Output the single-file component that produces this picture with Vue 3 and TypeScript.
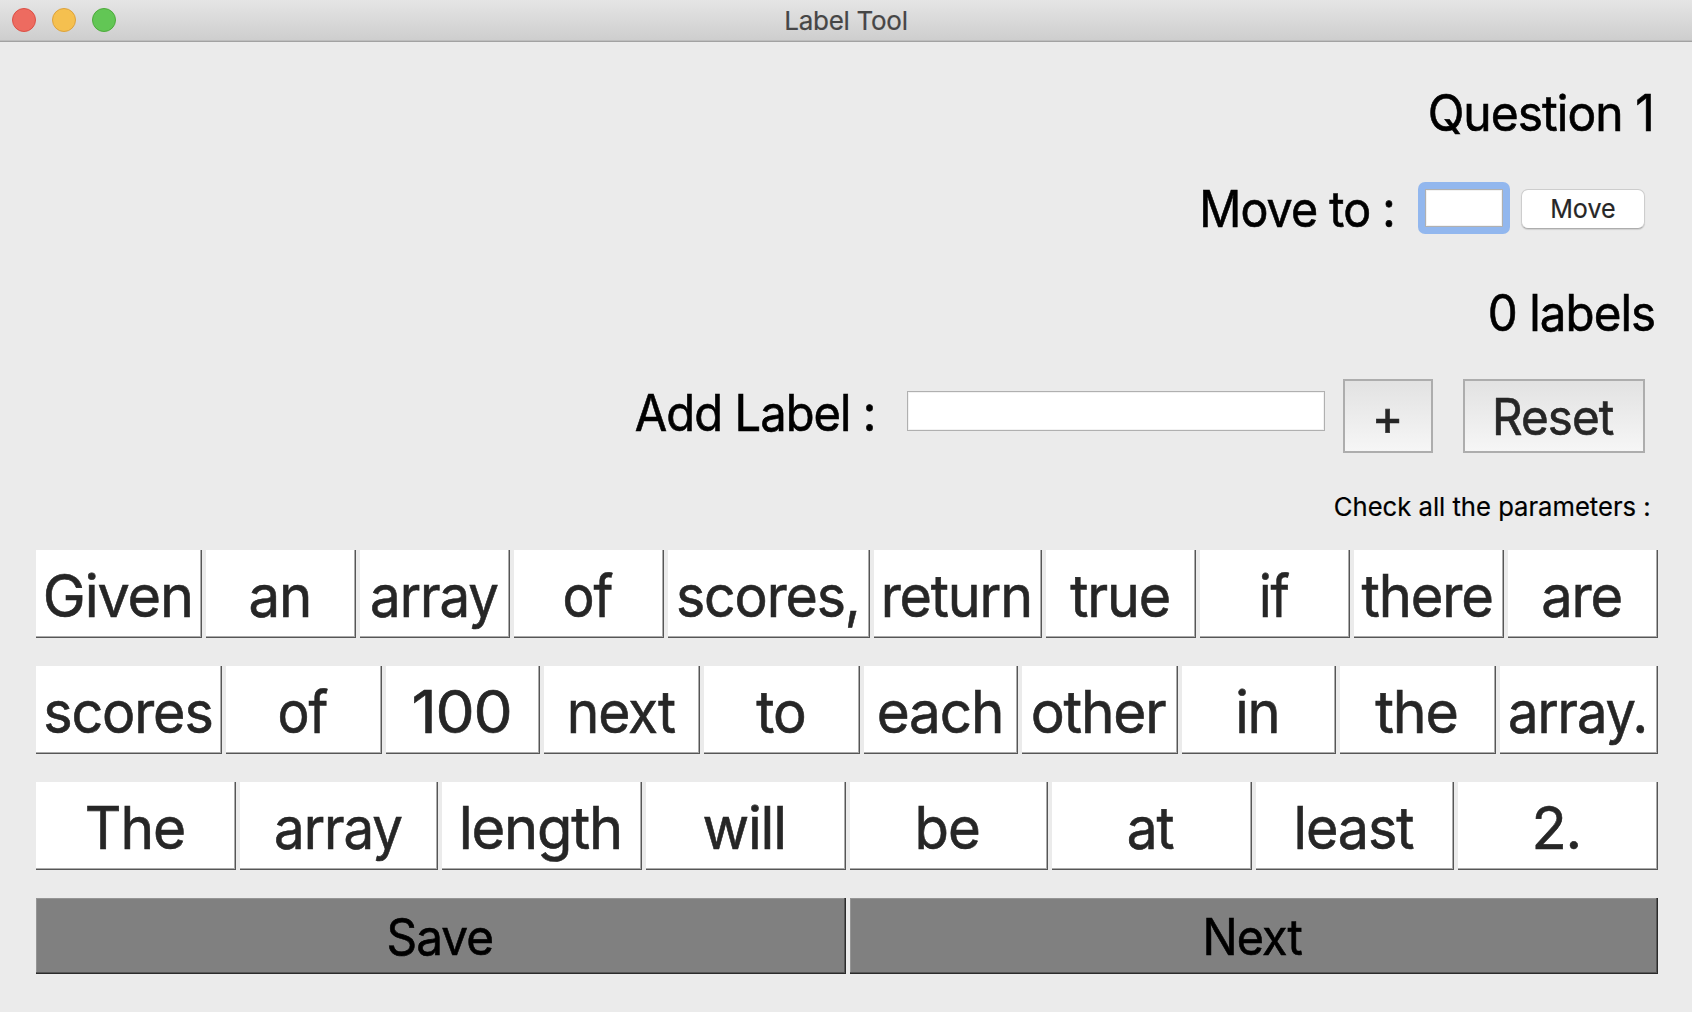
<script setup lang="ts">
interface Word {
  text: string
  width: number
  stretch: number
}

const w = (text: string, width: number, stretch: number): Word => ({ text, width, stretch })

const rows: Word[][] = [
  [
    w('Given', 166, 0.976), w('an', 150, 0.956), w('array', 150, 0.926), w('of', 150, 0.906),
    w('scores,', 202, 0.939), w('return', 168, 0.942), w('true', 150, 0.941), w('if', 150, 0.881),
    w('there', 150, 0.95), w('are', 150, 0.948),
  ],
  [
    w('scores', 186, 0.942), w('of', 156, 0.906), w('100', 154, 1.054), w('next', 156, 0.935),
    w('to', 156, 0.954), w('each', 154, 0.959), w('other', 156, 0.962), w('in', 154, 0.949),
    w('the', 156, 0.971), w('array.', 158, 0.92),
  ],
  [
    w('The', 200, 0.964), w('array', 198, 0.926), w('length', 200, 0.98), w('will', 200, 0.967),
    w('be', 198, 0.954), w('at', 200, 0.933), w('least', 198, 0.943), w('2.', 200, 0.982),
  ],
]

const stretch = (value: number) => ({ transform: `scaleX(${value})` })
</script>

<template>
  <div class="window">
    <header class="titlebar">
      <div class="lights">
        <span class="light close"></span>
        <span class="light minimize"></span>
        <span class="light zoom"></span>
      </div>
      <div class="title">Label Tool</div>
    </header>

    <main class="content">
      <div class="heading question"><span class="end" :style="stretch(0.959)">Question 1</span></div>

      <div class="move-row">
        <span class="caption end" :style="stretch(0.932)">Move to :</span>
        <div class="focus-ring"><input class="field small" type="text" /></div>
        <button class="mac-button"><span :style="stretch(0.966)">Move</span></button>
      </div>

      <div class="heading count"><span class="end" :style="stretch(0.95)">0 labels</span></div>

      <div class="add-row">
        <span class="caption end" :style="stretch(0.942)">Add Label :</span>
        <input class="field wide" type="text" />
        <button class="square-button plus"><span :style="stretch(0.96)">+</span></button>
        <button class="square-button reset"><span :style="stretch(0.951)">Reset</span></button>
      </div>

      <div class="hint"><span class="end" :style="stretch(0.985)">Check all the parameters :</span></div>

      <div class="words">
        <div v-for="(row, r) in rows" :key="r" class="word-row">
          <button v-for="(word, i) in row" :key="i" class="word" :style="{ width: word.width + 'px' }">
            <span :style="stretch(word.stretch)">{{ word.text }}</span>
          </button>
        </div>
      </div>

      <div class="actions">
        <button class="action save"><span :style="stretch(0.954)">Save</span></button>
        <button class="action next"><span :style="stretch(0.934)">Next</span></button>
      </div>
    </main>
  </div>
</template>

<style>
body {
  background: #ebebeb;
}
</style>

<style scoped>
.window {
  width: 1692px;
  height: 1012px;
  overflow: hidden;
  background: #ebebeb;
  color: #000;
  font-family: Inter, "Liberation Sans", sans-serif;
}

.window * {
  box-sizing: border-box;
}

span {
  display: inline-block;
  white-space: nowrap;
}

.end {
  transform-origin: right center;
}

button {
  margin: 0;
  padding: 0;
  color: #262626;
  font-family: inherit;
  text-align: center;
}

.titlebar {
  display: grid;
  grid-template-columns: 1fr auto 1fr;
  height: 42px;
  padding: 0 12px;
  background: linear-gradient(#e5e5e5, #cecece 40px);
  border-bottom: 1px solid #a2a2a2;
  box-shadow: inset 0 -1px 0 #bdbdbd;
}

.lights {
  display: flex;
  gap: 16px;
  padding-top: 8px;
}

.light {
  width: 24px;
  height: 24px;
  border: 1px solid;
  border-radius: 50%;
}

.close {
  background: #ed6b60;
  border-color: #dc4f45;
}

.minimize {
  background: #f5c04f;
  border-color: #dda23c;
}

.zoom {
  background: #62c655;
  border-color: #4dab3b;
}

.title {
  color: #464646;
  font-size: 26px;
  letter-spacing: -0.29px;
  line-height: 41px;
  -webkit-text-stroke: 0.2px;
}

.content {
  display: flex;
  flex-direction: column;
}

.heading,
.caption {
  font-size: 50px;
  letter-spacing: -1px;
  line-height: 60px;
  -webkit-text-stroke: 0.6px;
}

.heading,
.hint {
  display: flex;
  justify-content: flex-end;
}

.question {
  margin-top: 41px;
  padding-right: 38px;
}

.move-row {
  display: flex;
  justify-content: flex-end;
  align-items: center;
  height: 52px;
  margin-top: 39px;
  padding-right: 47px;
}

.move-row .caption {
  margin: 2px 23px 0 0;
}

.focus-ring {
  display: flex;
  width: 92px;
  height: 52px;
  margin-right: 11px;
  padding: 7px;
  background: #92b7ee;
  border-radius: 7px;
}

.field {
  padding: 0 6px;
  background: #fff;
  border: 1px solid #b0b0b0;
  border-radius: 0;
  box-shadow: inset 0 0 0 1px #f2f2f2;
  outline: none;
  font: 26px Inter, sans-serif;
}

.small {
  width: 78px;
  height: 38px;
}

.mac-button {
  width: 124px;
  height: 40px;
  margin-top: 2px;
  background: #fff;
  border: 1px solid #cdcdcd;
  border-bottom-color: #adadad;
  border-radius: 7px;
  box-shadow: 0 1px 1px rgba(0, 0, 0, 0.12);
  font-size: 26px;
  line-height: 38px;
  -webkit-text-stroke: 0.2px;
}

.count {
  margin-top: 49px;
  padding-right: 37px;
}

.add-row {
  display: flex;
  justify-content: flex-end;
  align-items: center;
  height: 74px;
  margin-top: 36px;
  padding-right: 47px;
}

.add-row .caption {
  margin: -6px 32px 0 0;
}

.wide {
  width: 418px;
  height: 40px;
  margin: -10px 18px 0 0;
}

.square-button {
  height: 74px;
  background: linear-gradient(#e2e2e2, #f6f6f6);
  border: 2px solid #adadad;
  font-size: 50px;
  line-height: 72px;
  -webkit-text-stroke: 0.6px;
}

.plus {
  width: 90px;
  margin-right: 30px;
}

.reset {
  width: 182px;
  padding-right: 2px;
  letter-spacing: -1px;
}

.hint {
  height: 32px;
  margin-top: 38px;
  padding-right: 41px;
  font-size: 26px;
  line-height: 32px;
  -webkit-text-stroke: 0.2px;
}

.words {
  display: flex;
  flex-direction: column;
  gap: 28px;
  margin: 27px 34px 0 36px;
}

.word-row {
  display: flex;
  gap: 4px;
}

.word {
  display: flex;
  justify-content: center;
  flex: none;
  height: 88px;
  padding: 10px 3px 0 0;
  background: #fff;
  border: 0;
  box-shadow: inset -1px -1px 0 #565656, inset -2px -2px 0 #ababab;
  font-size: 59px;
  letter-spacing: -1.2px;
  line-height: 71px;
  -webkit-text-stroke: 0.6px;
}

.actions {
  display: flex;
  gap: 4px;
  margin: 28px 34px 0 36px;
}

.action {
  height: 76px;
  padding: 2px 3px 0 0;
  background: #808080;
  border: 0;
  box-shadow: inset -1px -1px 0 #2b2b2b, inset -2px -2px 0 #565656, inset 1px 1px 0 #959595;
  color: #000;
  font-size: 50px;
  letter-spacing: -1px;
  line-height: 74px;
  -webkit-text-stroke: 0.6px;
}

.save {
  width: 810px;
}

.next {
  width: 808px;
}
</style>
